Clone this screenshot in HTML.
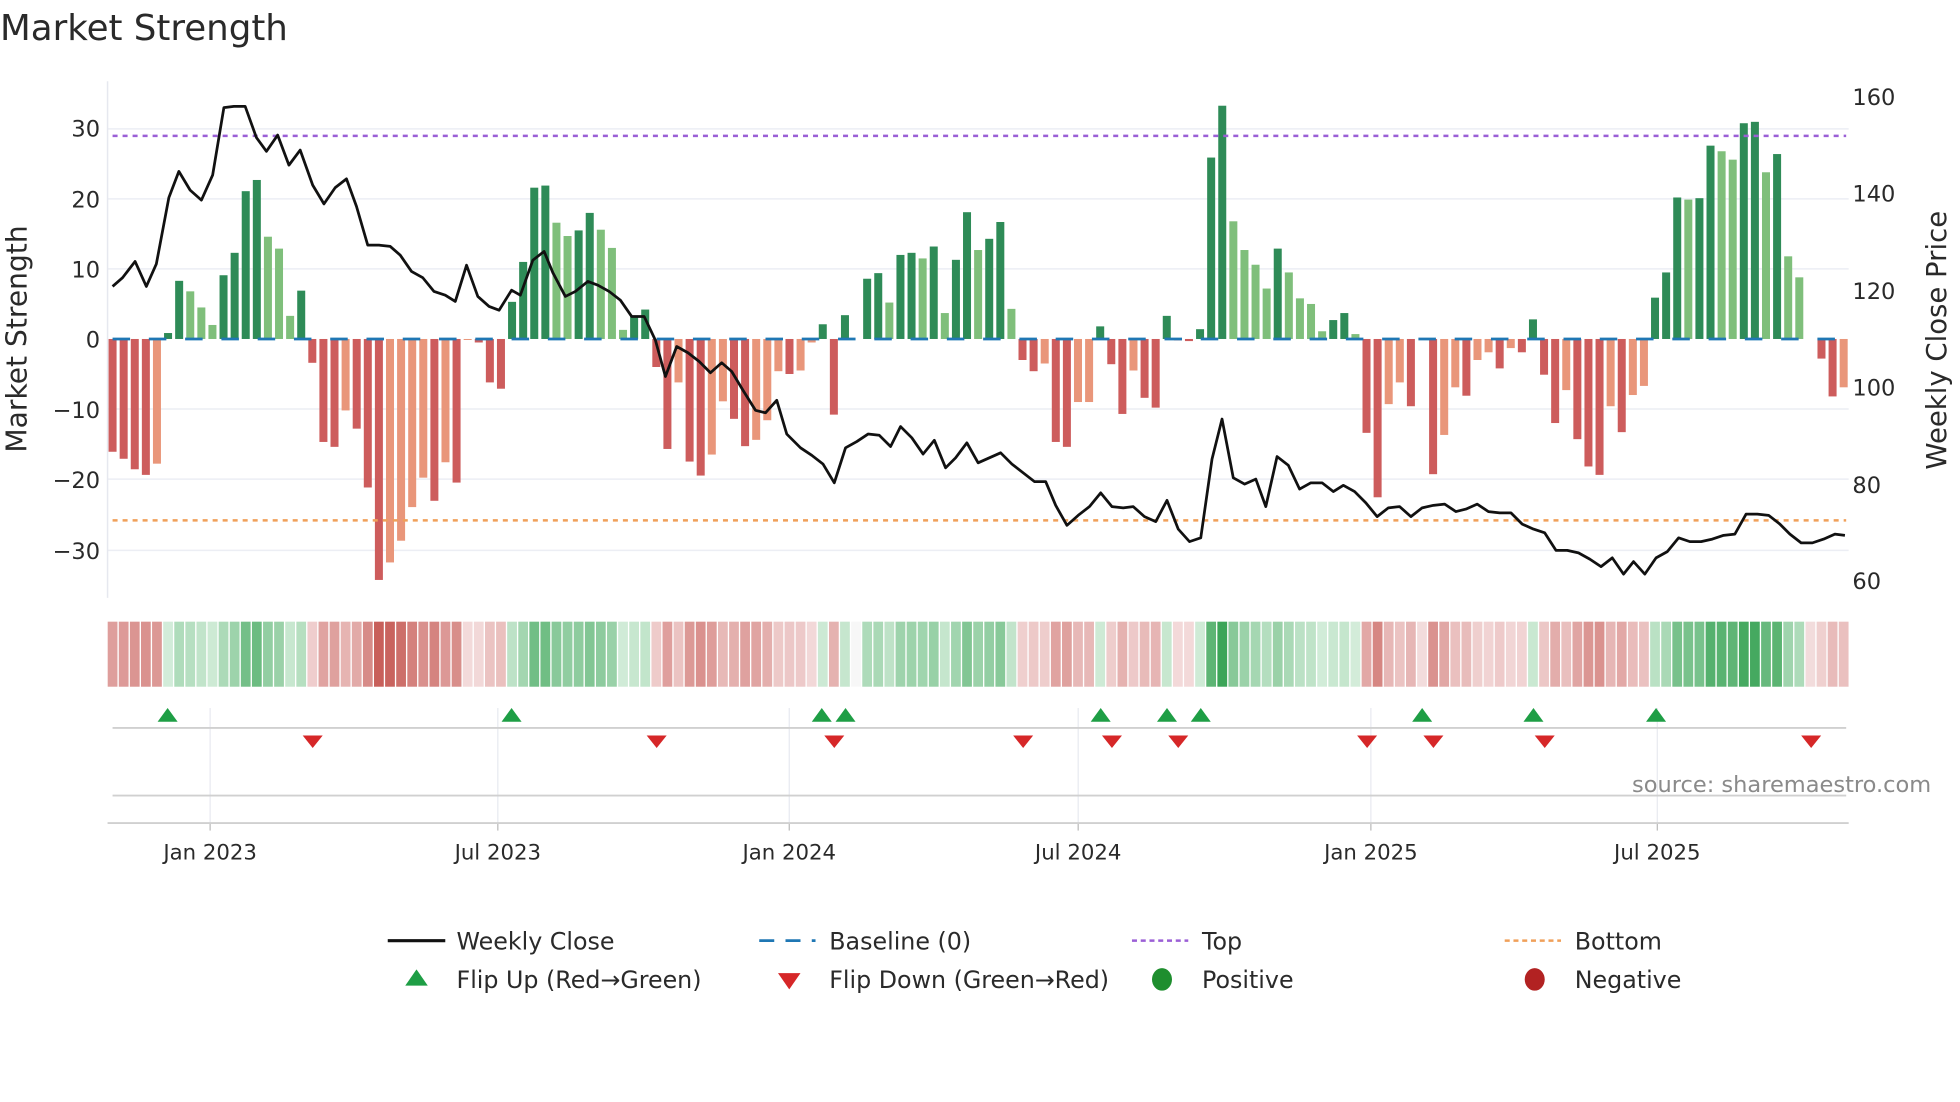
<!DOCTYPE html>
<html><head><meta charset="utf-8"><style>
html,body{margin:0;padding:0;background:#fff;}
svg{display:block;}
text{font-family:"DejaVu Sans","Liberation Sans",sans-serif;fill:#2a2a2a;}
</style></head><body>
<svg id="s" width="1960" height="1102" viewBox="0 0 1567 881" preserveAspectRatio="none" xmlns="http://www.w3.org/2000/svg">
<rect width="1567" height="881" fill="#fff"/>
<text x="0" y="32" font-size="28.5">Market Strength</text>
<g id="grid"></g>
<line x1="86" y1="65" x2="86" y2="478" stroke="#e6e8ef" stroke-width="1.2"/>
<g id="bars"></g>
<line x1="90" y1="271" x2="1476" y2="271" stroke="#1f77b4" stroke-width="2.2" stroke-dasharray="14 15"/>
<line x1="90" y1="108.6" x2="1476" y2="108.6" stroke="#9b5fd6" stroke-width="2" stroke-dasharray="4 4"/>
<line x1="90" y1="416" x2="1476" y2="416" stroke="#f0a05a" stroke-width="2" stroke-dasharray="4 4"/>
<polyline id="price" fill="none" stroke="#111" stroke-width="2.2" stroke-linejoin="round"/>
<g id="strip"></g>
<g id="marks"></g>
<g font-size="18" text-anchor="end">
<text x="80" y="109">30</text><text x="80" y="166">20</text><text x="80" y="222">10</text>
<text x="80" y="278">0</text><text x="80" y="334">−10</text><text x="80" y="390">−20</text><text x="80" y="447">−30</text>
</g>
<g font-size="18">
<text x="1481" y="84">160</text><text x="1481" y="161">140</text><text x="1481" y="239">120</text>
<text x="1481" y="316">100</text><text x="1481" y="394">80</text><text x="1481" y="471">60</text>
</g>
<text transform="translate(21,271) rotate(-90)" font-size="22.5" text-anchor="middle">Market Strength</text>
<text transform="translate(1556,272) rotate(-90)" font-size="22" text-anchor="middle">Weekly Close Price</text>
<text x="1544" y="633" font-size="18" text-anchor="end" style="fill:#8a8a8a">source: sharemaestro.com</text>
<g font-size="17" text-anchor="middle">
<text x="168" y="687">Jan 2023</text><text x="398" y="687">Jul 2023</text><text x="631" y="687">Jan 2024</text>
<text x="862" y="687">Jul 2024</text><text x="1096" y="687">Jan 2025</text><text x="1325" y="687">Jul 2025</text>
</g>
<g font-size="19">
<line x1="310" y1="752" x2="356" y2="752" stroke="#111" stroke-width="2.5"/>
<text x="365" y="759">Weekly Close</text>
<line x1="607" y1="752" x2="652" y2="752" stroke="#1f77b4" stroke-width="2.2" stroke-dasharray="12 9"/>
<text x="663" y="759">Baseline (0)</text>
<line x1="905" y1="752" x2="950" y2="752" stroke="#9b5fd6" stroke-width="2" stroke-dasharray="4 3"/>
<text x="961" y="759">Top</text>
<line x1="1203" y1="752" x2="1248" y2="752" stroke="#f0a05a" stroke-width="2" stroke-dasharray="4 3"/>
<text x="1259" y="759">Bottom</text>
<polygon points="324,788 342,788 333,775" fill="#1e9e45"/>
<text x="365" y="790">Flip Up (Red→Green)</text>
<polygon points="622,778 640,778 631,791" fill="#d62728"/>
<text x="663" y="790">Flip Down (Green→Red)</text>
<ellipse cx="929" cy="783" rx="8" ry="9" fill="#1e8e2e"/>
<text x="961" y="790">Positive</text>
<ellipse cx="1227" cy="783" rx="8" ry="9" fill="#b22222"/>
<text x="1259" y="790">Negative</text>
</g>
</svg>
<script>
var NS="http://www.w3.org/2000/svg";
function el(p,t,a){var e=document.createElementNS(NS,t);for(var k in a)e.setAttribute(k,a[k]);p.appendChild(e);return e;}
var d=[[-16.1,'R'],[-17.1,'R'],[-18.6,'R'],[-19.4,'R'],[-17.8,'S'],[0.85,'G'],[8.3,'G'],[6.8,'L'],[4.5,'L'],[2.0,'L'],[9.1,'G'],[12.3,'G'],[21.1,'G'],[22.7,'G'],[14.6,'L'],[12.9,'L'],[3.3,'L'],[6.9,'G'],[-3.4,'R'],[-14.7,'R'],[-15.4,'R'],[-10.2,'S'],[-12.8,'R'],[-21.2,'R'],[-34.4,'R'],[-31.9,'S'],[-28.8,'S'],[-24.0,'S'],[-19.8,'S'],[-23.1,'R'],[-17.6,'S'],[-20.5,'R'],[-0.1,'S'],
[-0.5,'R'],[-6.2,'R'],[-7.1,'R'],[5.3,'G'],[11.0,'G'],[21.6,'G'],[21.9,'G'],[16.6,'L'],[14.7,'L'],[15.5,'G'],[18.0,'G'],[15.6,'L'],[13.0,'L'],[1.3,'L'],[3.2,'G'],[4.2,'G'],[-4.0,'R'],[-15.7,'R'],[-6.2,'S'],[-17.5,'R'],[-19.5,'R'],[-16.5,'S'],[-8.9,'S'],[-11.4,'R'],[-15.3,'R'],[-14.4,'S'],[-11.6,'S'],[-4.6,'S'],[-5.0,'R'],[-4.5,'S'],[-0.5,'S'],[2.1,'G'],[-10.8,'R'],
[3.4,'G'],[0,'G'],[8.6,'G'],[9.4,'G'],[5.2,'L'],[12.0,'G'],[12.3,'G'],[11.5,'L'],[13.2,'G'],[3.7,'L'],[11.3,'G'],[18.1,'G'],[12.7,'L'],[14.3,'G'],[16.7,'G'],[4.3,'L'],[-3.0,'R'],[-4.6,'R'],[-3.5,'S'],[-14.7,'R'],[-15.4,'R'],[-9.0,'S'],[-9.0,'S'],[1.8,'G'],[-3.6,'R'],[-10.7,'R'],[-4.5,'S'],[-8.4,'R'],[-9.8,'R'],[3.3,'G'],[-0.2,'R'],[-0.3,'R'],[1.4,'G'],
[25.9,'G'],[33.3,'G'],[16.8,'L'],[12.7,'L'],[10.6,'L'],[7.2,'L'],[12.9,'G'],[9.5,'L'],[5.8,'L'],[5.0,'L'],[1.1,'L'],[2.7,'G'],[3.7,'G'],[0.7,'L'],[-13.4,'R'],[-22.6,'R'],[-9.3,'S'],[-6.2,'S'],[-9.6,'R'],[0,'R'],[-19.3,'R'],[-13.7,'S'],[-6.9,'S'],[-8.1,'R'],[-3.0,'S'],[-1.9,'S'],[-4.2,'R'],[-1.3,'S'],[-1.9,'R'],[2.8,'G'],[-5.1,'R'],[-12.0,'R'],[-7.3,'S'],[-14.3,'R'],
[-18.2,'R'],[-19.4,'R'],[-9.6,'S'],[-13.3,'R'],[-8.0,'S'],[-6.7,'S'],[5.9,'G'],[9.5,'G'],[20.2,'G'],[19.9,'L'],[20.1,'G'],[27.6,'G'],[26.8,'L'],[25.6,'L'],[30.8,'G'],[31.0,'G'],[23.8,'L'],[26.4,'G'],[11.8,'L'],[8.8,'L'],[0,'R'],[-2.8,'R'],[-8.2,'R'],[-6.9,'S']];
var col={G:'#2e8b57',L:'#7fbf7b',R:'#cd5c5c',S:'#e9967a'};
var n=d.length,x0=90,x1=1474,st=(x1-x0)/(n-1),z=271,k=5.6;
var g=document.getElementById('grid');
[103,159,215,327,383,440].forEach(function(y){el(g,'line',{x1:86,x2:1478,y1:y,y2:y,stroke:'#eceef4','stroke-width':1.2});});
[168,398,631,862,1096,1325].forEach(function(x){el(g,'line',{x1:x,x2:x,y1:566,y2:658,stroke:'#e8eaf0','stroke-width':1});el(g,'line',{x1:x,x2:x,y1:658,y2:664,stroke:'#bbb','stroke-width':1});});
el(g,'line',{x1:90,x2:1476,y1:582,y2:582,stroke:'#d0d0d0','stroke-width':1.5});
el(g,'line',{x1:90,x2:1476,y1:636,y2:636,stroke:'#d0d0d0','stroke-width':1.5});
el(g,'line',{x1:86,x2:1478,y1:658,y2:658,stroke:'#d0d0d0','stroke-width':1.5});
var b=document.getElementById('bars'),s=document.getElementById('strip');
function lerp(a,c,t){var r=[];for(var i=0;i<3;i++)r.push(Math.round(a[i]+(c[i]-a[i])*t));return 'rgb('+r.join(',')+')';}
d.forEach(function(p,i){var v=p[0],x=x0+i*st,h=Math.abs(v)*k;
 if(h>0.3)el(b,'rect',{x:x-3.2,width:6.4,y:v>0?z-h:z,height:Math.max(h,0.8),fill:col[p[1]]});
 var t=Math.min(1,Math.abs(v)/33),c;
 if(v>0)c=lerp([214,238,220],[60,165,88],t);else if(v<0)c=lerp([243,218,218],[200,95,90],t);else c=(p[1]=='R'?'#f2dcdc':'#f7f7f7');
 el(s,'rect',{x:x-3.9,width:7.8,y:497,height:52,fill:c});
});
var pts="90,229 98,222 108,209 117,229 125,211 135,158 143,137 152,152 161,160 170,140 179,86 187,85 196,85 205,110 213,121 222,108 231,132 240,120 250,148 259,163 268,150 277,143 285,165 294,196 303,196 312,197 320,204 329,217 338,222 347,233 356,236 364,241 373,212 382,237 391,245 399,248 409,232 416,236 426,208 435,201 442,218 452,237 460,233 470,225 478,228 487,233 496,240 505,253 515,253 524,272 532,301 541,277 550,282 559,289 568,298 577,290 585,297 594,312 604,328 612,330 621,320 629,347 640,358 649,364 658,371 667,386 676,358 685,353 694,347 703,348 712,357 720,341 729,350 738,363 747,352 756,374 764,366 773,354 782,370 791,366 800,362 809,371 818,378 827,385 836,385 844,404 853,420 862,412 871,405 880,394 889,405 898,406 906,405 915,413 924,417 933,400 942,423 951,433 960,430 969,367 977,335 986,382 995,387 1004,383 1012,405 1021,365 1030,372 1039,391 1048,386 1057,386 1066,393 1074,388 1083,393 1092,402 1101,413 1110,406 1119,405 1128,413 1137,406 1146,404 1155,403 1164,409 1172,407 1181,403 1190,409 1199,410 1208,410 1217,419 1226,423 1235,426 1244,440 1253,440 1262,442 1271,447 1280,453 1289,446 1298,459 1306,449 1315,459 1324,446 1333,441 1342,430 1351,433 1360,433 1369,431 1378,428 1387,427 1396,411 1405,411 1414,412 1423,419 1431,427 1440,434 1449,434 1458,431 1467,427 1475,428";
document.getElementById('price').setAttribute('points',pts);
var m=document.getElementById('marks');
[134,409,657,676,880,933,960,1137,1226,1324].forEach(function(x){el(m,'polygon',{points:(x-8)+',577 '+(x+8)+',577 '+x+',566',fill:'#1e9e45'});});
[250,525,667,818,889,942,1093,1146,1235,1448].forEach(function(x){el(m,'polygon',{points:(x-8)+',588 '+(x+8)+',588 '+x+',598',fill:'#d62728'});});
</script>
</body></html>
